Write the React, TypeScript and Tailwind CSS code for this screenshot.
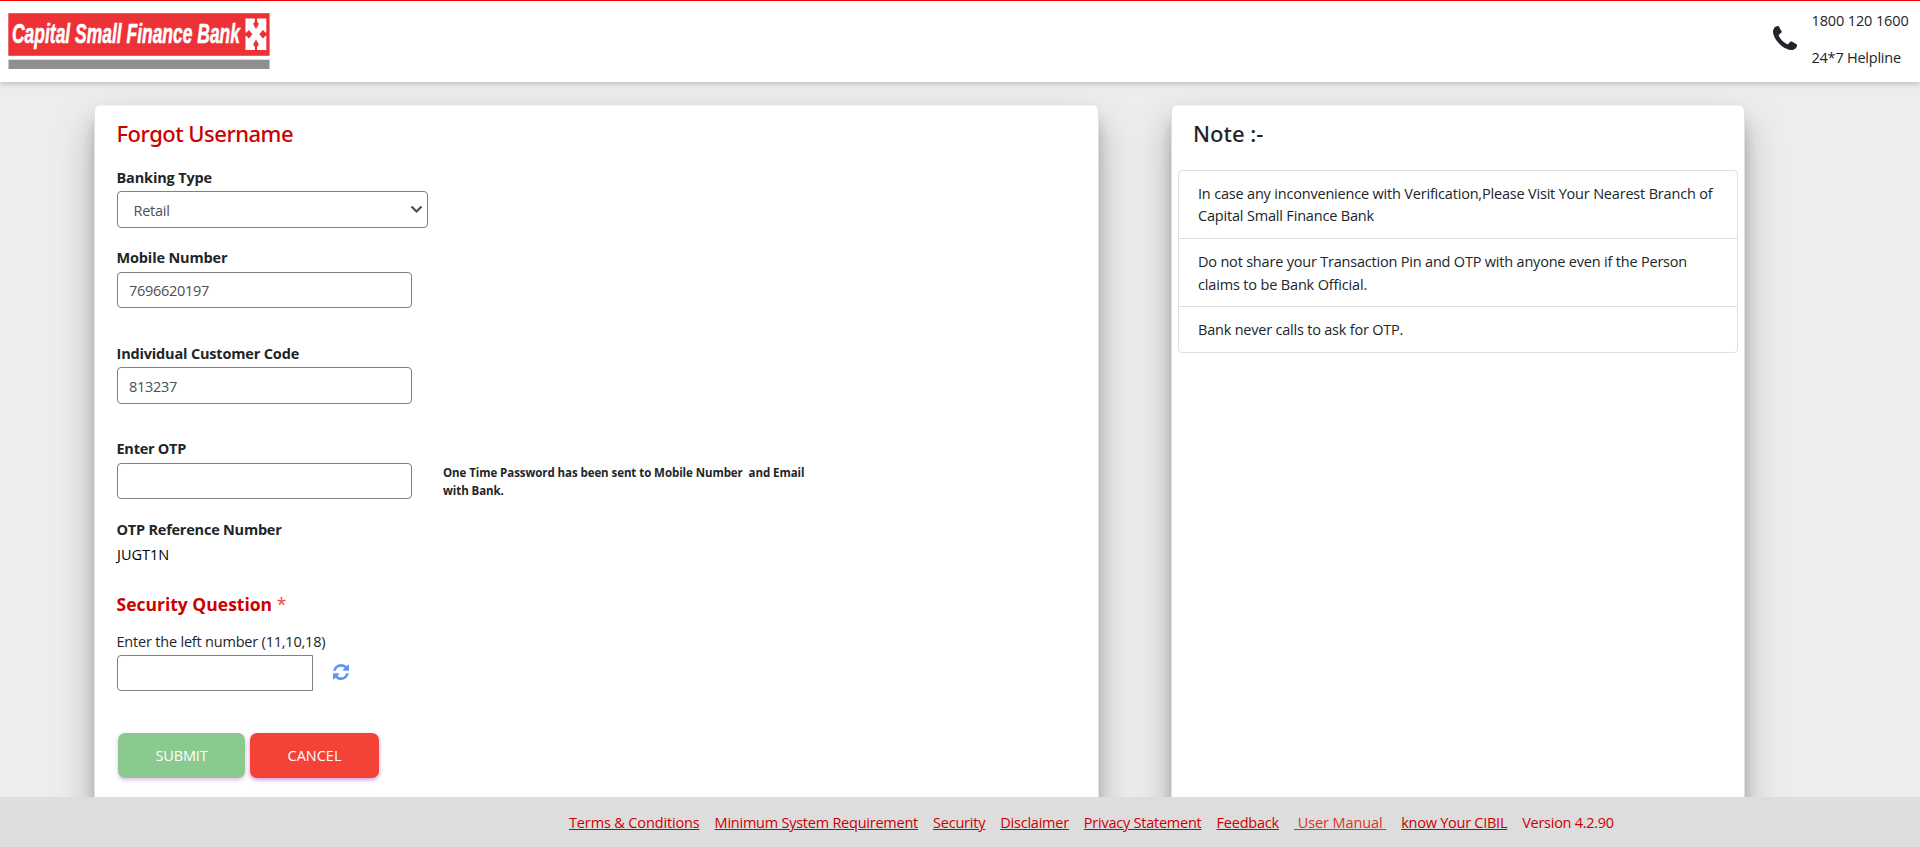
import type { ReactNode } from "react";

function Logo() {
  return (
    <svg width="262" height="57" viewBox="0 0 262 57" className="overflow-visible" role="img" aria-label="Capital Small Finance Bank">
      <rect x="0.3" y="0.2" width="261.3" height="42.6" fill="#ec3237" />
      <rect x="0.5" y="46.7" width="261" height="9.3" fill="#8f8f91" />
      <text
        x="4"
        y="29.7"
        fill="#fff"
        stroke="#fff"
        strokeWidth="0.6"
        fontFamily="Liberation Sans, Arial, sans-serif"
        fontStyle="italic"
        fontWeight="700"
        fontSize="28.5"
        textLength="228"
        lengthAdjust="spacingAndGlyphs"
      >
        Capital Small Finance Bank
      </text>
      <rect x="237.500" y="5.500" width="20.800" height="31.500" fill="#fff" />
      <g fill="#ec3237">
        <path d="M246.900 5h2.200v3.500l1.700 2.300-1 2.200-1.800 3-1.800-3-1-2.200 1.700-2.300z" />
        <path d="M246.900 37.500h2.200V34l1.700-2.300-1-2.200-1.800-3-1.800 3-1 2.200 1.700 2.300z" />
        <path d="M237 19.500h1.500l2.300-2.500 1.500 1.500 2 2.700-2 2.700-1.500 1.500-2.300-2.500H237z" />
        <path d="M258.800 19.500h-1.500l-2.300-2.500-1.500 1.500-2 2.700 2 2.700 1.500 1.500 2.300-2.500h1.500z" />
      </g>
    </svg>
  );
}

function PhoneIcon() {
  return (
    <svg width="24" height="24" viewBox="0 0 1408 1408" fill="#212529">
      <path d="M1408 1112q0 27-10 70.500t-21 68.500q-21 50-122 106-94 51-186 51-27 0-53-3.500t-57.500-12.500-47-14.500-55.500-20.500-49-18q-98-35-175-83-127-79-264-216t-216-264q-48-77-83-175-3-9-18-49t-20.500-55.500-14.500-47-12.500-57.500-3.500-53q0-92 51-186 56-101 106-122 25-11 68.500-21t70.500-10q14 0 21 3 18 6 53 76 11 19 30 54t35 63.500 31 53.500q3 4 17.500 25t21.500 35.500 7 28.500q0 20-28.500 50t-62 55-62 53-28.500 46q0 9 5 22.500t8.500 20.500 14 24 11.500 19q76 137 174 235t235 174q2 1 19 11.500t24 14 20.500 8.500 22.500 5q18 0 46-28.500t53-62 55-62 50-28.500q14 0 28.500 7t35.500 21.500 25 17.500q25 15 53.500 31t63.500 35 54 30q70 35 76 53 3 7 3 21z" />
    </svg>
  );
}

function RefreshIcon() {
  return (
    <svg width="16" height="16" viewBox="128 128 1536 1536" fill="#6495ed" className="-mt-[2px]">
      <path d="M1639 1056q0 5-1 7-64 268-268 434.500t-478 166.500q-146 0-282.500-55t-243.500-157l-129 129q-19 19-45 19t-45-19-19-45v-448q0-26 19-45t45-19h448q26 0 45 19t19 45-19 45l-137 137q71 66 161 102t187 36q134 0 250-65t186-179q11-17 53-117 8-23 30-23h192q13 0 22.500 9.500t9.500 22.500zm25-800v448q0 26-19 45t-45 19h-448q-26 0-45-19t-19-45 19-45l138-138q-148-137-349-137-134 0-250 65t-186 179q-11 17-53 117-8 23-30 23h-199q-13 0-22.500-9.500t-9.500-22.500v-7q65-268 270-434.500t480-166.500q146 0 284 55.500t245 156.500l130-129q19-19 45-19t45 19 19 45z" />
    </svg>
  );
}

function Card({ className, children }: { className: string; children: ReactNode }) {
  return (
    <section
      className={`h-[760px] shrink-0 rounded-[6px] border border-[#e2e2e2] border-t-[#f4f4f4] bg-white shadow-[0_19px_38px_rgba(0,0,0,0.26),0_15px_12px_rgba(0,0,0,0.17)] ${className}`}
    >
      {children}
    </section>
  );
}

function Label({ className, children }: { className: string; children: ReactNode }) {
  return (
    <div className={`-ml-[0.5px] h-[22px] pt-px leading-[22px] font-bold whitespace-nowrap ${className}`}>{children}</div>
  );
}

const inputBase =
  "block border border-[#808080] bg-white pl-[11px] text-[14.5px] tracking-[-0.29px] text-[#495057] outline-none";

const links = [
  { text: "Terms & Conditions", className: "tracking-[-0.14px]" },
  { text: "Minimum System Requirement", className: "tracking-[-0.24px]" },
  { text: "Security", className: "tracking-[-0.2px]" },
  { text: "Disclaimer", className: "tracking-[-0.24px]" },
  { text: "Privacy Statement", className: "tracking-[-0.24px]" },
  { text: "Feedback", className: "tracking-[-0.2px]" },
  { text: "\u00a0User Manual\u00a0", className: "tracking-[-0.1px] text-[#dd3322]" },
  { text: "know Your CIBIL", className: "tracking-[-0.25px]" },
];

export default function App() {
  return (
    <div className="flex h-[847px] w-[1920px] flex-col overflow-hidden bg-[#ededed] font-['Open_Sans','Noto_Sans',sans-serif] text-[14.5px] text-[#212529]">
      <header className="z-10 flex h-[82px] shrink-0 justify-between border-t border-[#ee0000] bg-white pl-2 shadow-[0_2px_5px_rgba(0,0,0,0.2)]">
        <div className="pt-3">
          <Logo />
        </div>
        <div className="flex w-[147px]">
          <div className="w-[38.500px] pt-[25px]">
            <PhoneIcon />
          </div>
          <div className="whitespace-nowrap">
            <div className="mt-[9px] h-[22px] leading-[22px] tracking-[-0.13px]">1800 120 1600</div>
            <div className="mt-[15px] h-[22px] leading-[22px] tracking-[-0.23px]">24*7 Helpline</div>
          </div>
        </div>
      </header>

      <main className="flex h-[715px] shrink-0 items-start overflow-hidden pt-[23px] pl-[94px]">
        <Card className="w-[1005px] pt-[12px] pl-[22px]">
          <h1 className="-ml-[0.5px] h-[30px] font-['Noto_Sans',sans-serif] text-[22px] leading-[30px] font-medium tracking-[-0.5px] text-[#cc0000]">
            Forgot Username
          </h1>

          <Label className="mt-[18px] tracking-[-0.15px]">Banking Type</Label>
          <div className="mt-[3px] flex h-[37px] w-[311px] items-center justify-between rounded-[4px] border border-[#808080] pr-[4px] pl-[15.5px] tracking-[-0.27px] text-[#495057]">
            <span className="pt-[2px]">Retail</span>
            <svg width="13" height="9" viewBox="0 0 13 9" fill="none" stroke="#495057" strokeWidth="2.200">
              <path d="M1.500 1.500 6.500 6.500 11.500 1.500" />
            </svg>
          </div>

          <Label className="mt-[18px] tracking-[-0.15px]">Mobile Number</Label>
          <input className={`${inputBase} mt-1 h-[36px] w-[295px] rounded-[4px]`} defaultValue="7696620197" />

          <Label className="mt-[34px] tracking-[-0.17px]">Individual Customer Code</Label>
          <input className={`${inputBase} mt-[3px] h-[37px] w-[295px] rounded-[4px] pt-[2px]`} defaultValue="813237" />

          <Label className="mt-[33px] tracking-[-0.26px]">Enter OTP</Label>
          <div className="mt-1 flex h-[36px] items-start">
            <input className={`${inputBase} h-[36px] w-[295px] rounded-[4px]`} />
            <div className="ml-[31px] pt-px text-[11.500px] leading-[18px] font-bold tracking-[-0.07px] whitespace-pre">
              {"One Time Password has been sent to Mobile Number  and Email\nwith Bank."}
            </div>
          </div>

          <Label className="mt-[19px] tracking-[-0.22px]">OTP Reference Number</Label>
          <div className="mt-[3px] h-[22px] pt-px leading-[22px] text-black">JUGT1N</div>

          <h2 className="-ml-[0.5px] mt-[26px] h-[26px] text-[17.500px] leading-[26px] font-bold text-[#cc0000]">
            Security Question <span className="font-normal text-[#f44336]">*</span>
          </h2>
          <div className="-ml-[0.5px] mt-[14px] h-[22px] leading-[22px] tracking-[-0.2px]">
            Enter the left number (11,10,18)
          </div>
          <div className="mt-[2px] flex h-[36px] items-center gap-[19.5px]">
            <input className={`${inputBase} h-[36px] w-[196px] rounded-l-[4px]`} />
            <RefreshIcon />
          </div>

          <div className="mt-[42px] ml-px flex gap-[5px] text-white">
            <button className="h-[45px] w-[127px] rounded-[7px] bg-[#8bca8f] tracking-[-0.16px] shadow-[0_2px_4px_rgba(156,39,176,0.3)]">
              SUBMIT
            </button>
            <button className="h-[45px] w-[129px] rounded-[7px] bg-[#f44336] shadow-[0_2px_4px_rgba(156,39,176,0.45)]">
              CANCEL
            </button>
          </div>
        </Card>

        <Card className="ml-[72px] w-[574px] px-[6px] pt-[12px]">
          <h2 className="h-[30px] pl-[15px] font-['Noto_Sans',sans-serif] text-[22px] leading-[30px] font-medium">
            Note :-
          </h2>
          <ul className="mt-[22px] divide-y divide-[#dfdfdf] rounded-[4px] border border-[#dfdfdf] leading-[22.500px] whitespace-nowrap">
            <li className="h-[68px] pt-[12px] pl-[19px]">
              <div className="tracking-[-0.19px]">
                In case any inconvenience with Verification,Please Visit Your Nearest Branch of
              </div>
              <div className="-mt-[0.5px] tracking-[-0.18px]">Capital Small Finance Bank</div>
            </li>
            <li className="h-[68px] pt-[12px] pl-[19px]">
              <div className="tracking-[-0.2px]">
                Do not share your Transaction Pin and OTP with anyone even if the Person
              </div>
              <div className="tracking-[-0.16px]">claims to be Bank Official.</div>
            </li>
            <li className="h-[45px] pt-[12px] pl-[19px] tracking-[-0.21px]">Bank never calls to ask for OTP.</li>
          </ul>
        </Card>
      </main>

      <footer className="z-10 flex h-[50px] shrink-0 gap-[15px] bg-[#dddddd] pt-[15px] pl-[569px] leading-[22px] whitespace-nowrap text-[#cc0000]">
        {links.map((link) => (
          <a key={link.text} className={`underline underline-offset-[1px] ${link.className}`}>
            {link.text}
          </a>
        ))}
        <span className="tracking-[-0.28px]">Version 4.2.90</span>
      </footer>
    </div>
  );
}
